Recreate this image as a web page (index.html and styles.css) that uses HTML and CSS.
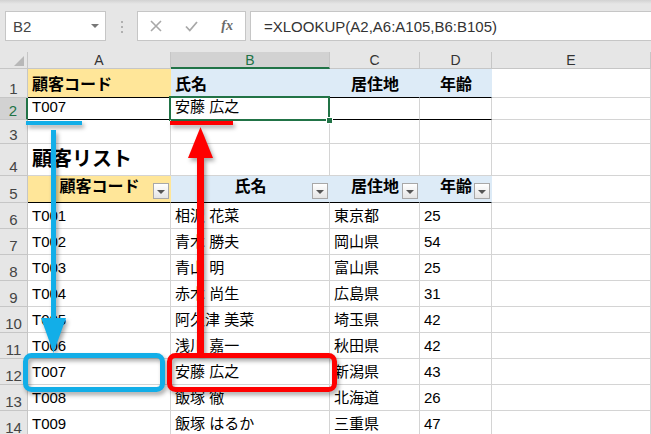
FILE: index.html
```html
<!DOCTYPE html>
<html lang="ja">
<head>
<meta charset="utf-8">
<link rel="stylesheet" href="styles.css">
</head>
<body>
<div class="toolbar">
  <div class="namebox"><span>B2</span><span class="caret"></span></div>
  <div class="dots"><i></i><i></i><i></i></div>
  <div class="fbtns">
    <span><svg width="12" height="12" viewBox="0 0 12 12"><path d="M1 1L11 11M11 1L1 11" stroke="#a8a8a8" stroke-width="1.6" fill="none"/></svg></span>
    <span><svg width="13" height="11" viewBox="0 0 13 11"><path d="M1 5.5L4.8 9.5L12 1" stroke="#a8a8a8" stroke-width="1.8" fill="none"/></svg></span>
    <span class="fx">fx</span>
  </div>
  <div class="formula">=XLOOKUP(A2,A6:A105,B6:B105)</div>
</div>
<div class="sheet">
  <div class="corner"><i></i></div>
  <div class="ch">A</div>
  <div class="ch sel">B</div>
  <div class="ch">C</div>
  <div class="ch">D</div>
  <div class="ch">E</div>

  <div class="rh">1</div>
  <div class="c y bold hb">顧客コード</div>
  <div class="c b bold hb">氏名</div>
  <div class="c b bold hb ctr">居住地</div>
  <div class="c b bold hb ctr">年齢</div>
  <div class="c"></div>

  <div class="rh sel">2</div>
  <div class="c hb">T007</div>
  <div class="c hb active">安藤 広之</div>
  <div class="c hb"></div>
  <div class="c hb"></div>
  <div class="c"></div>

  <div class="rh">3</div>
  <div class="c"></div><div class="c"></div><div class="c"></div><div class="c"></div><div class="c"></div>

  <div class="rh">4</div>
  <div class="c big bold">顧客リスト</div>
  <div class="c"></div><div class="c"></div><div class="c"></div><div class="c"></div>

  <div class="rh">5</div>
  <div class="c y bold hb ctr th">顧客コード<span class="filter"></span></div>
  <div class="c b bold hb ctr th">氏名<span class="filter"></span></div>
  <div class="c b bold hb ctr th">居住地<span class="filter"></span></div>
  <div class="c b bold hb ctr th">年齢<span class="filter"></span></div>
  <div class="c"></div>

  <div class="rh">6</div><div class="c">T001</div><div class="c">相沢 花菜</div><div class="c">東京都</div><div class="c">25</div><div class="c"></div>
  <div class="rh">7</div><div class="c">T002</div><div class="c">青木 勝夫</div><div class="c">岡山県</div><div class="c">54</div><div class="c"></div>
  <div class="rh">8</div><div class="c">T003</div><div class="c">青山 明</div><div class="c">富山県</div><div class="c">25</div><div class="c"></div>
  <div class="rh">9</div><div class="c">T004</div><div class="c">赤木 尚生</div><div class="c">広島県</div><div class="c">31</div><div class="c"></div>
  <div class="rh">10</div><div class="c">T005</div><div class="c">阿久津 美菜</div><div class="c">埼玉県</div><div class="c">42</div><div class="c"></div>
  <div class="rh">11</div><div class="c">T006</div><div class="c">浅川 嘉一</div><div class="c">秋田県</div><div class="c">42</div><div class="c"></div>
  <div class="rh">12</div><div class="c">T007</div><div class="c">安藤 広之</div><div class="c">新潟県</div><div class="c">43</div><div class="c"></div>
  <div class="rh">13</div><div class="c">T008</div><div class="c">飯塚 徹</div><div class="c">北海道</div><div class="c">26</div><div class="c"></div>
  <div class="rh">14</div><div class="c">T009</div><div class="c">飯塚 はるか</div><div class="c">三重県</div><div class="c">47</div><div class="c"></div>
</div>

<svg class="overlay" width="651" height="434" viewBox="0 0 651 434">
  <g class="shadow">
    <rect x="26" y="121" width="56" height="4" fill="#12aee8"/>
    <rect x="51" y="130" width="5" height="190" fill="#12aee8"/>
    <polygon points="41,318 66,318 53.5,353" fill="#12aee8"/>
    <rect x="25.5" y="355.5" width="137" height="34" rx="6" fill="none" stroke="#12aee8" stroke-width="5"/>
  </g>
  <g class="shadow">
    <rect x="170" y="121" width="63" height="4" fill="#ff0000"/>
    <rect x="197" y="156" width="7" height="198" fill="#ff0000"/>
    <polygon points="188,158 213,158 200.5,127" fill="#ff0000"/>
    <rect x="169.5" y="355.5" width="165" height="34" rx="6" fill="none" stroke="#ff0000" stroke-width="5"/>
  </g>
</svg>
</body>
</html>
```
FILE: styles.css
```css
html, body {
  margin: 0;
  padding: 0;
}
body {
  width: 651px;
  height: 434px;
  overflow: hidden;
  position: relative;
  background: #fff;
  font-family: "Liberation Sans", "Noto Sans CJK JP", sans-serif;
  color: #000;
}

/* toolbar */
.toolbar {
  height: 52px;
  box-sizing: border-box;
  padding: 11px 0 0 5px;
  display: flex;
  align-items: flex-start;
  background: linear-gradient(#d2d2d2, #e6e6e6 4px, #e6e6e6);
}
.namebox {
  width: 101px;
  height: 30px;
  box-sizing: border-box;
  border: 1px solid #c6c6c6;
  background: #fff;
  display: flex;
  align-items: center;
  padding-left: 7px;
  font-size: 15px;
  color: #444;
}
.caret {
  margin-left: auto;
  margin-right: 6px;
  width: 0;
  height: 0;
  border-left: 4px solid transparent;
  border-right: 4px solid transparent;
  border-top: 4px solid #777;
}
.dots {
  width: 31px;
  display: flex;
  flex-direction: column;
  align-items: center;
  gap: 3px;
  padding-top: 10px;
}
.dots i {
  width: 2px;
  height: 2px;
  background: #b0b0b0;
}
.fbtns {
  width: 109px;
  height: 30px;
  box-sizing: border-box;
  border: 1px solid #c6c6c6;
  background: #fff;
  display: flex;
}
.fbtns span {
  width: 36px;
  display: flex;
  align-items: center;
  justify-content: center;
}
.fbtns .fx {
  font-family: "Liberation Serif", "DejaVu Serif", serif;
  font-style: italic;
  font-weight: bold;
  font-size: 14px;
  color: #6a6a6a;
}
.formula {
  flex: 1;
  margin-left: 4px;
  height: 30px;
  box-sizing: border-box;
  border: 1px solid #c6c6c6;
  border-right: none;
  background: #fff;
  padding-left: 13px;
  display: flex;
  align-items: center;
  font-size: 15px;
  color: #333;
  white-space: nowrap;
}

/* sheet grid */
.sheet {
  display: grid;
  grid-template-columns: 28px 143px 159px 90px 72px 159px;
  grid-template-rows: 17px 29px 22px 24px 32px 27px repeat(9, 26px);
}
.corner {
  background: #e6e6e6;
  border-right: 1px solid #c6c6c6;
  border-bottom: 1px solid #c6c6c6;
  display: flex;
  align-items: flex-end;
  justify-content: flex-end;
  padding: 0 3px 2px 0;
}
.corner i {
  width: 0;
  height: 0;
  border-left: 10px solid transparent;
  border-bottom: 10px solid #b8b8b8;
}
.ch {
  background: #e6e6e6;
  border-right: 1px solid #c6c6c6;
  border-bottom: 1px solid #c6c6c6;
  font-size: 14px;
  line-height: 16px;
  text-align: center;
  color: #333;
}
.ch.sel {
  background: #d2d2d2;
  color: #217346;
  border-bottom: 2px solid #217346;
}
.rh {
  background: #e6e6e6;
  border-right: 1px solid #c6c6c6;
  border-bottom: 1px solid #c6c6c6;
  font-size: 15px;
  line-height: 16px;
  color: #444;
  display: flex;
  align-items: flex-end;
  justify-content: center;
  padding-bottom: 0;
}
.rh.sel {
  background: #d2d2d2;
  color: #217346;
  border-right: 2px solid #217346;
}
.c {
  box-sizing: border-box;
  border-right: 1px solid #d4d4d4;
  border-bottom: 1px solid #d4d4d4;
  font-size: 15px;
  line-height: 18px;
  display: flex;
  align-items: flex-end;
  padding: 0 3px 3px 4px;
  white-space: nowrap;
  position: relative;
  min-width: 0;
}
.bold {
  font-weight: bold;
  font-size: 16px;
}
.big {
  font-size: 20px;
  line-height: 24px;
  padding-bottom: 4px;
}
.ctr {
  justify-content: center;
}
.y {
  background: #ffe699;
  border-right-color: #ffe699;
}
.b {
  background: #ddebf7;
  border-right-color: #ddebf7;
}
.hb {
  border-bottom-color: #000;
}
.th {
  padding-bottom: 6px;
}
.active::after {
  content: "";
  position: absolute;
  left: -2px;
  top: -2px;
  right: -1px;
  bottom: -2px;
  border: 2px solid #217346;
}
.active::before {
  content: "";
  position: absolute;
  right: -4px;
  bottom: -5px;
  width: 5px;
  height: 5px;
  background: #217346;
  border: 1px solid #fff;
  z-index: 2;
}
.filter {
  position: absolute;
  right: 1px;
  bottom: 3px;
  width: 16px;
  height: 16px;
  box-sizing: border-box;
  border: 1px solid #a8a8a8;
  background: linear-gradient(#ffffff, #e4e4e4);
  display: flex;
  align-items: center;
  justify-content: center;
}
.filter::after {
  content: "";
  width: 0;
  height: 0;
  border-left: 4px solid transparent;
  border-right: 4px solid transparent;
  border-top: 4px solid #555;
  margin-top: 2px;
}

/* annotation layer */
.overlay {
  position: absolute;
  left: 0;
  top: 0;
  pointer-events: none;
}
.shadow {
  filter: drop-shadow(2px 3px 2px rgba(0, 0, 0, 0.35));
}
```
